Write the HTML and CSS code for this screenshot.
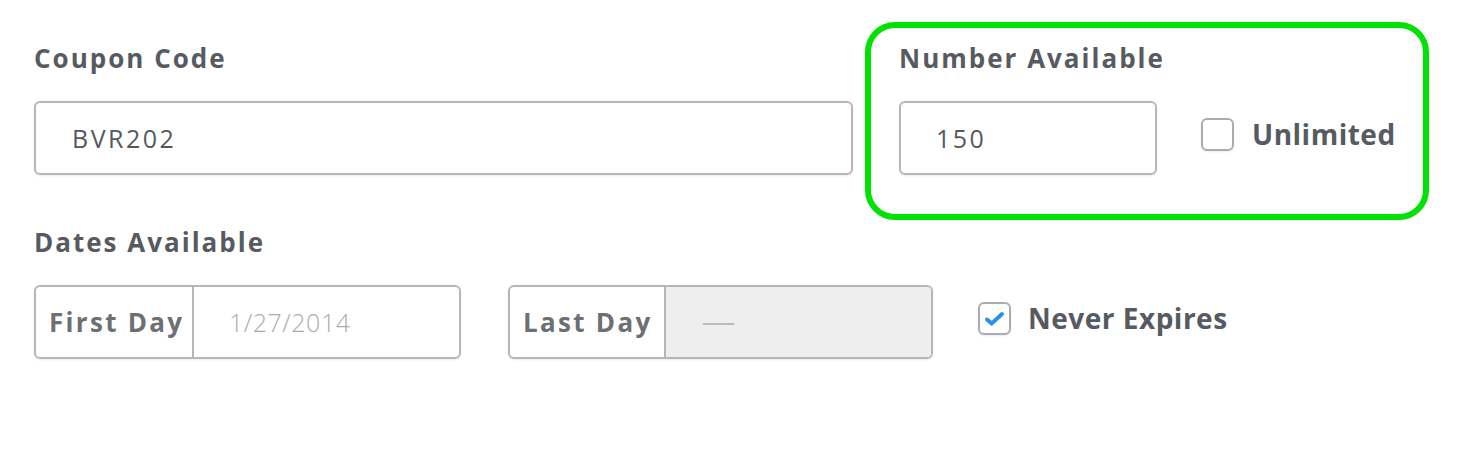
FILE: index.html
```html
<!DOCTYPE html>
<html>
<head>
<meta charset="utf-8">
<link rel="stylesheet" href="styles.css">
</head>
<body>
<div class="form">
  <div class="row-top">
    <div class="coupon">
      <div class="label">Coupon Code</div>
      <div class="input wide">BVR202</div>
    </div>
    <div class="highlight">
      <div class="label">Number Available</div>
      <div class="inline">
        <div class="input small">150</div>
        <label class="check unlimited">
          <span class="box"></span>
          <span class="check-text">Unlimited</span>
        </label>
      </div>
    </div>
  </div>
  <div class="dates">
    <div class="label">Dates Available</div>
    <div class="inline">
      <div class="date-group first">
        <div class="prefix first-prefix">First Day</div>
        <div class="value">1/27/2014</div>
      </div>
      <div class="date-group last">
        <div class="prefix last-prefix">Last Day</div>
        <div class="value disabled"><span class="dash">—</span></div>
      </div>
      <label class="check never">
        <span class="box">
          <svg width="33" height="33" viewBox="0 0 33 33"><path d="M9 17.5 L13.6 21.6 L24 12" fill="none" stroke="#2a8fe9" stroke-width="4" stroke-linecap="round" stroke-linejoin="round"/></svg>
        </span>
        <span class="check-text">Never Expires</span>
      </label>
    </div>
  </div>
</div>
</body>
</html>
```

FILE: styles.css
```css
* { box-sizing: border-box; }
html, body { margin: 0; padding: 0; background: #fff; }
body {
  font-family: "Open Sans", Lato, "Liberation Sans", sans-serif;
  color: #565b61;
  width: 1480px;
  height: 460px;
  overflow: hidden;
}
.form { padding: 22px 0 0 34px; }
.row-top { display: flex; align-items: flex-start; }
.label {
  font-size: 26px;
  font-weight: 700;
  line-height: 30px;
  letter-spacing: 2px;
  color: #565b61;
}
.coupon { width: 831px; padding-top: 21px; }
.input {
  margin-top: 28px;
  height: 74px;
  border: 2px solid #b4b6b9;
  border-radius: 6px;
  box-shadow: 0 1px 2px rgba(0,0,0,0.08);
  display: flex;
  align-items: center;
  padding-left: 36px;
  font-size: 25px;
  letter-spacing: 2.5px;
  color: #55595e;
}
.input.wide { width: 819px; }
.input.small { width: 258px; padding-left: 35px; }
.highlight {
  width: 564px;
  height: 198px;
  border: 6px solid #00e104;
  border-radius: 30px;
  padding: 15px 0 0 28px;
}
.inline { display: flex; align-items: flex-start; }
.check { display: flex; align-items: center; margin-top: 45px; }
.check.unlimited { margin-left: 44px; }
.check.never { margin-left: 45px; margin-top: 45px; }
.box {
  width: 33px; height: 33px;
  border: 2px solid #a9acb0;
  border-radius: 6px;
  box-shadow: 0 1px 2px rgba(0,0,0,0.08);
  display: block;
  position: relative;
  flex: none;
}
.box svg { position: absolute; left: -2px; top: -2px; }
.check-text {
  margin-left: 18px;
  font-size: 28px;
  font-weight: 700;
  letter-spacing: 0.5px;
  line-height: 33px;
  color: #565b61;
}
.check.never .check-text { margin-left: 17px; }
.dates { margin-top: 7px; }
.date-group {
  margin-top: 28px;
  height: 74px;
  border: 2px solid #b4b6b9;
  border-radius: 6px;
  box-shadow: 0 1px 2px rgba(0,0,0,0.08);
  display: flex;
  overflow: hidden;
}
.date-group.first { width: 427px; margin-right: 47px; }
.date-group.last { width: 425px; }
.prefix {
  padding-left: 13px;
  border-right: 2px solid #b4b6b9;
  display: flex;
  align-items: center;
  font-size: 26px;
  font-weight: 700;
  letter-spacing: 2.3px;
  color: #6c7075;
  flex: none;
}
.first-prefix { width: 158px; }
.last-prefix { width: 156px; }
.value {
  flex: 1;
  display: flex;
  align-items: center;
  padding-left: 35px;
  font-size: 25px;
  letter-spacing: 0.5px;
  color: #aaacaf;
  font-weight: 300;
}
.value.disabled { background: #eeeeee; padding-left: 37px; }
.dash {
  font-family: "Liberation Sans", sans-serif;
  font-size: 31px;
  color: #b8babd;
  font-weight: 400;
  letter-spacing: 0;
}
```
